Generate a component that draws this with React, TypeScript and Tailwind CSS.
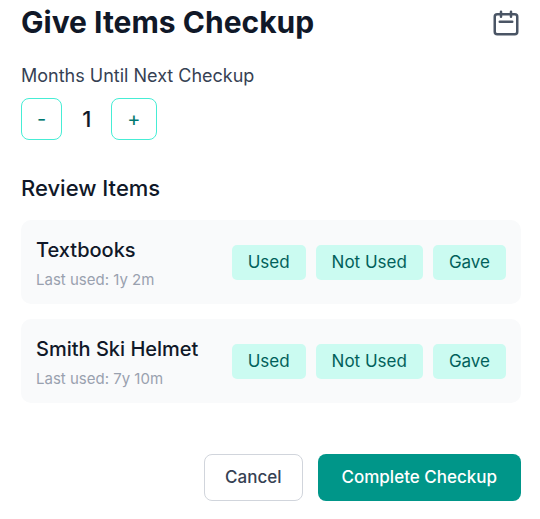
import { useState } from 'react';

const items = [
  { name: 'Textbooks', lastUsed: '1y 2m' },
  { name: 'Smith Ski Helmet', lastUsed: '7y 10m' },
];

const actions = ['Used', 'Not Used', 'Gave'];

function CalendarIcon() {
  return (
    <svg width="30" height="30" viewBox="0 0 24 24" fill="none" stroke="currentColor" strokeWidth="2" strokeLinecap="round" strokeLinejoin="round" aria-hidden="true">
      <path d="M8 7V3m8 4V3m-9 8h10M5 21h14a2 2 0 002-2V7a2 2 0 00-2-2H5a2 2 0 00-2 2v12a2 2 0 002 2z" />
    </svg>
  );
}

export default function App() {
  const [months, setMonths] = useState(1);

  return (
    <main className="bg-white pt-1 pr-[19px] pl-[21px] font-['Inter',sans-serif] text-gray-900">
      <header className="flex items-center justify-between">
        <h1 className="text-[30px] leading-9 font-bold">Give Items Checkup</h1>
        <span className="pt-0.5 text-gray-600">
          <CalendarIcon />
        </span>
      </header>

      <section className="mt-6">
        <h2 className="text-[18px] leading-6 text-gray-700">Months Until Next Checkup</h2>
        <div className="mt-2.5 flex items-center gap-5">
          <button type="button" aria-label="Decrease months" onClick={() => setMonths(Math.max(1, months - 1))} className="h-[42px] rounded-lg border border-teal-300 px-[15px] text-[20px] text-teal-700">-</button>
          <span className="text-[22px] font-medium">{months}</span>
          <button type="button" aria-label="Increase months" onClick={() => setMonths(months + 1)} className="h-[42px] rounded-lg border border-teal-300 px-[15px] text-[20px] text-teal-700">+</button>
        </div>
      </section>

      <section className="mt-8">
        <h2 className="text-[22px] leading-8 font-medium">Review Items</h2>
        <ul className="mt-4 flex flex-col gap-[15px]">
          {items.map((item) => (
            <li key={item.name} className="flex items-center justify-between rounded-[10px] bg-gray-50 p-[15px]">
              <div>
                <h3 className="text-[20px] leading-[30px] font-medium">{item.name}</h3>
                <p className="mt-1.5 text-[15px] leading-[18px] text-gray-400">Last used: {item.lastUsed}</p>
              </div>
              <div className="flex gap-2.5">
                {actions.map((action) => (
                  <button key={action} type="button" className="rounded-[5px] bg-teal-100 px-4 py-[5px] text-[17px] leading-[25px] text-teal-800">{action}</button>
                ))}
              </div>
            </li>
          ))}
        </ul>
      </section>

      <footer className="mt-[51px] flex justify-end gap-[15px]">
        <button type="button" className="h-[47px] rounded-lg border border-gray-300 px-5 text-[17px] font-medium text-gray-700">Cancel</button>
        <button type="button" className="h-[47px] rounded-lg bg-teal-600 px-6 text-[17px] font-medium text-white">Complete Checkup</button>
      </footer>
    </main>
  );
}
